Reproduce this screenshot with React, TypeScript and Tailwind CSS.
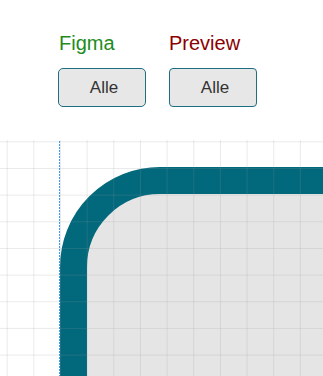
export default function App() {
  return (
    <div className="w-[323px] h-[376px] bg-white overflow-hidden flex flex-col" style={{ fontFamily: '"Liberation Sans", Arial, sans-serif' }}>
      <div className="h-[140px] flex gap-[23px] pl-[58px] pt-[31px]">
        <div className="flex flex-col w-[88px]">
          <div className="text-[20px] leading-6 text-[#1e8b1e] pl-px">Figma</div>
          <button className="mt-[13px] w-[88px] h-[39px] rounded-[5px] border border-[#1f6f82] bg-[#e7e7e7] text-[17px] text-[#333] pl-1 flex items-center justify-center">
            Alle
          </button>
        </div>
        <div className="flex flex-col w-[88px]">
          <div className="text-[20px] leading-6 text-[#8b0000]">Preview</div>
          <button className="mt-[13px] w-[88px] h-[39px] rounded-[4px] border border-[#1f6f82] bg-[#e7e7e7] text-[17px] text-[#333] pl-1 flex items-center justify-center">
            Alle
          </button>
        </div>
      </div>
      <div className="relative flex-1 overflow-hidden pl-[60px] pt-[27px]">
        <div className="w-[420px] h-[420px] rounded-[100px] border-[27px] border-[#02687c] bg-[#e5e5e5]" />
        <div className="pointer-events-none absolute inset-0 bg-[linear-gradient(to_right,rgba(150,150,150,0.2)_1px,transparent_1px),linear-gradient(to_bottom,rgba(150,150,150,0.2)_1px,transparent_1px)] bg-[size:26.667px_26.667px] bg-[position:6.667px_1.333px]" />
        <div className="pointer-events-none absolute left-[59px] top-px bottom-0 w-px bg-[linear-gradient(to_bottom,#3d9cf0_2px,transparent_2px)] bg-[size:1px_3px]" />
      </div>
    </div>
  );
}
